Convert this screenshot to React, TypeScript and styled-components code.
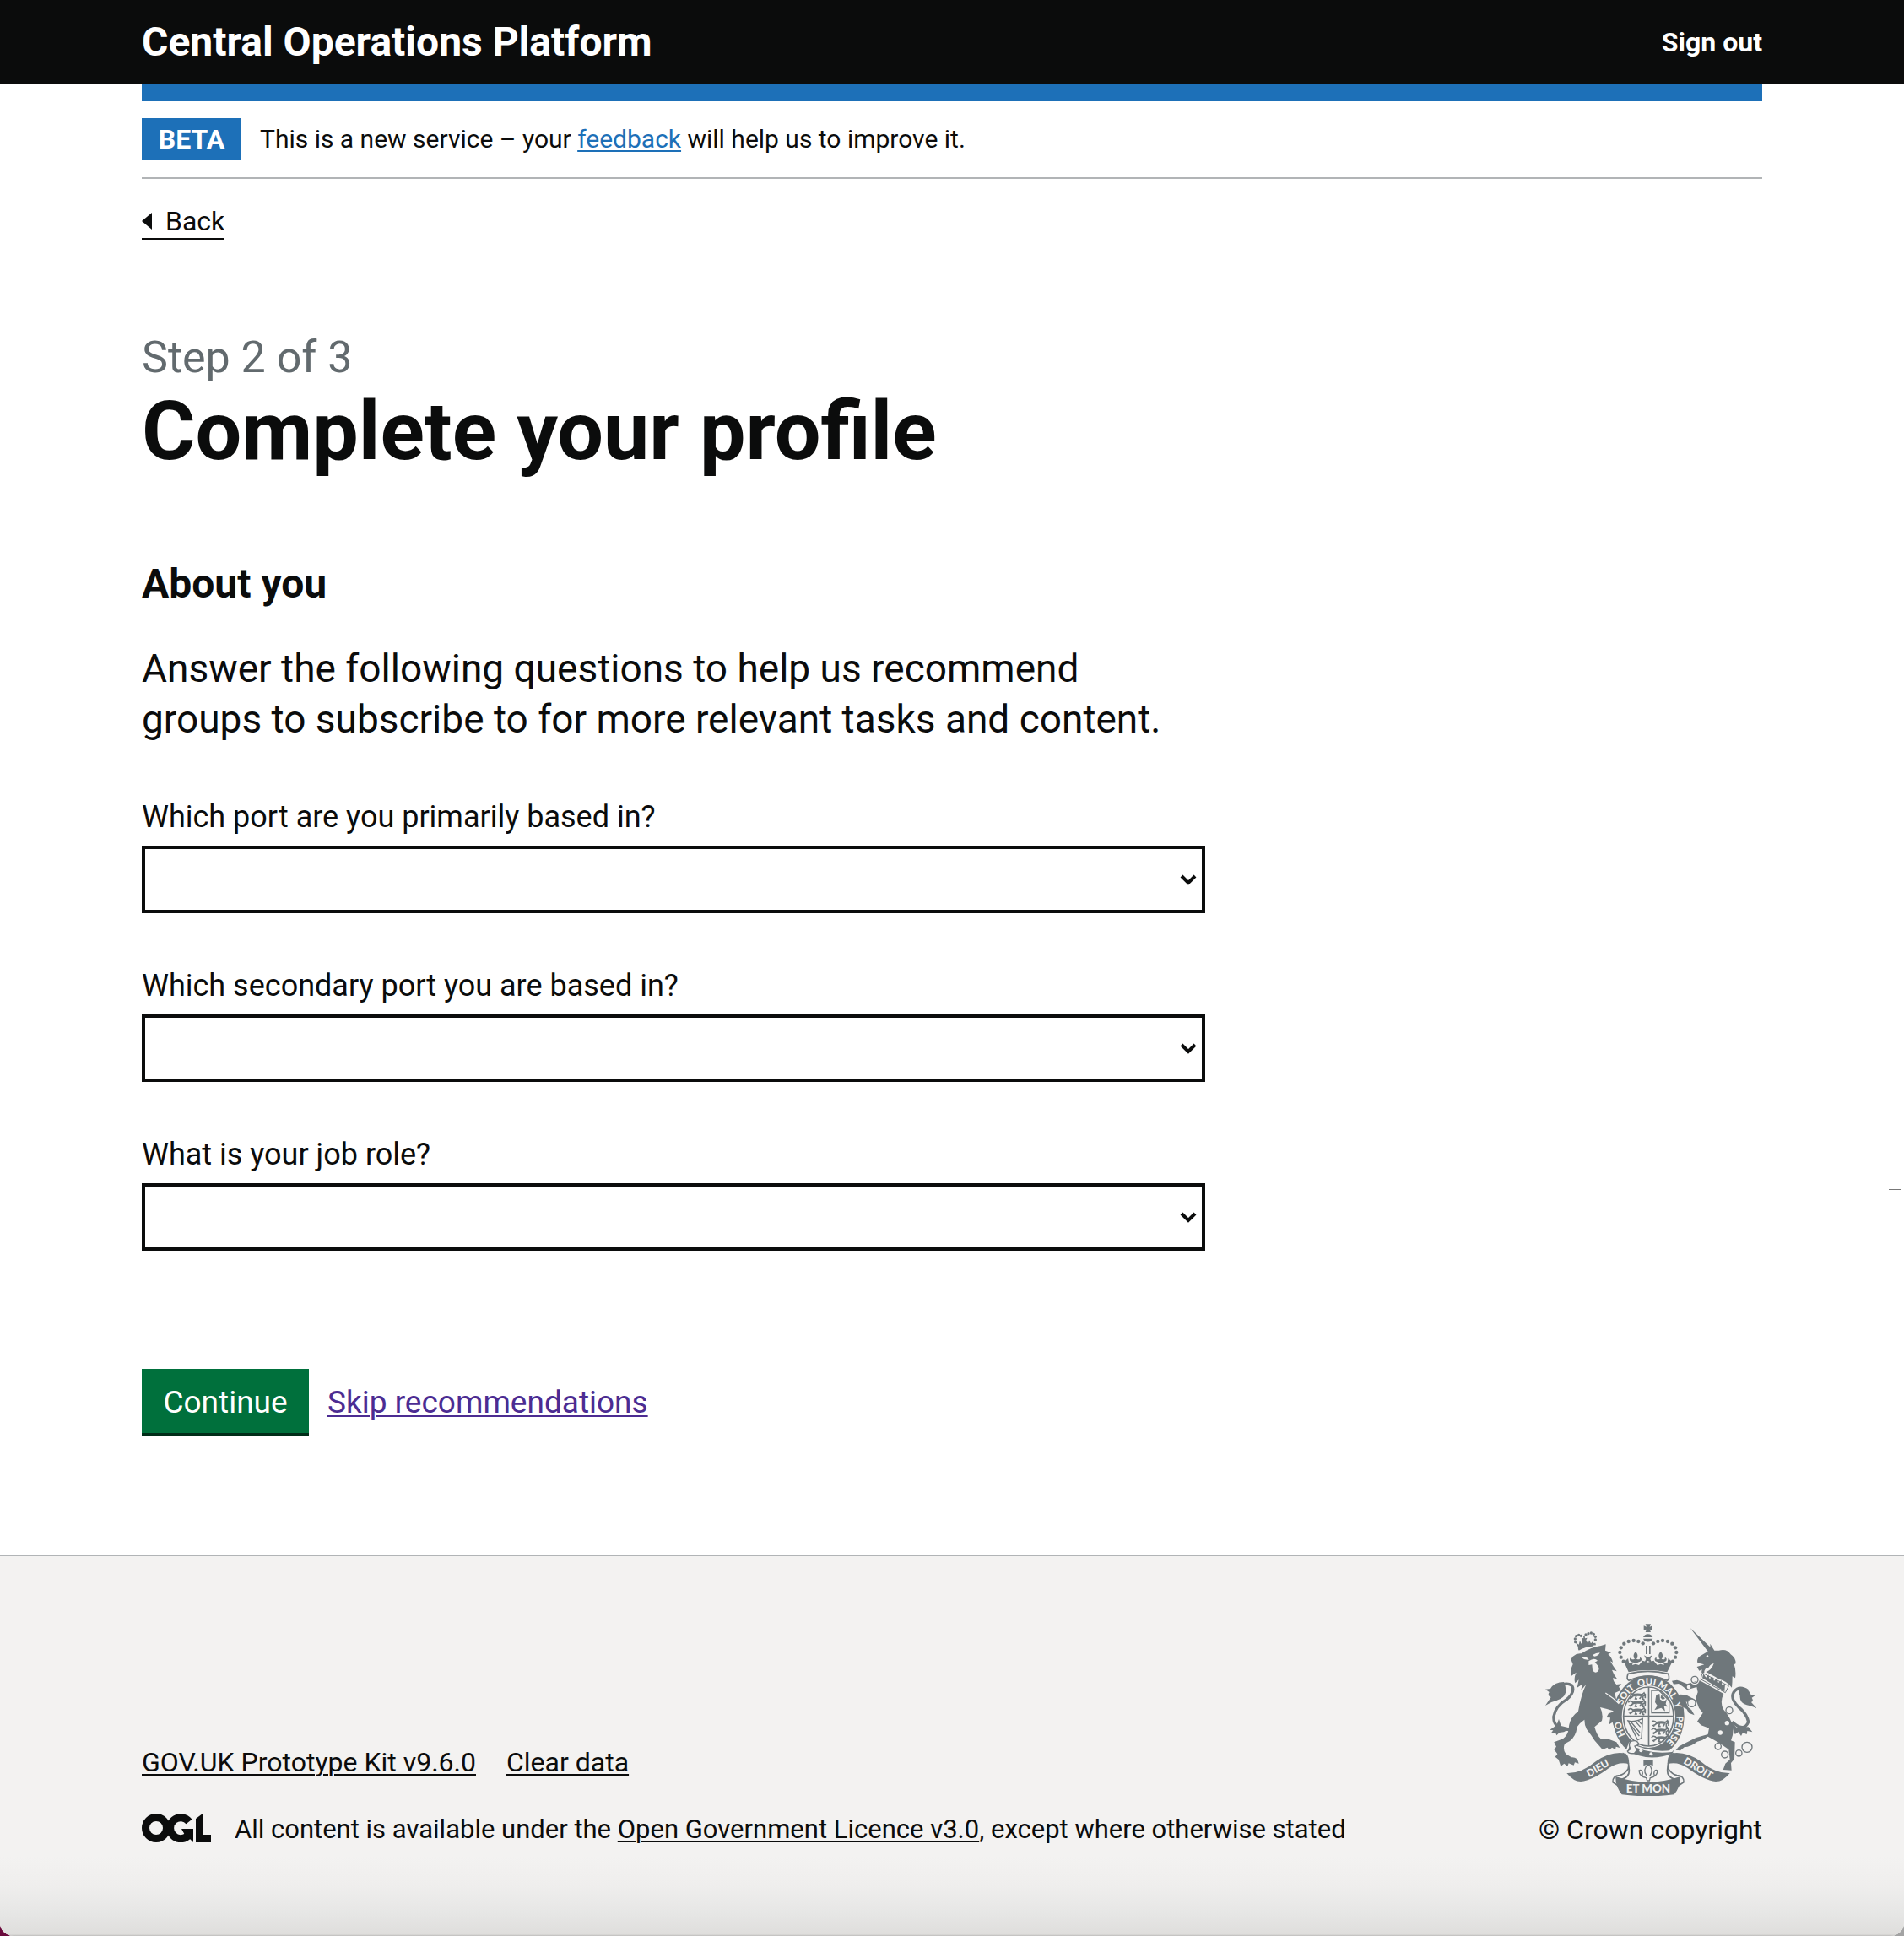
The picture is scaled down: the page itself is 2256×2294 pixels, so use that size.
import React from "react";
import styled, { createGlobalStyle } from "styled-components";

const ink = "#0b0c0c";
const blue = "#1d70b8";
const line = "#b1b4b6";
const footerGrey = "#f3f2f1";
const crestGrey = "#6f777b";

const GlobalStyle = createGlobalStyle`
  *, *::before, *::after { box-sizing: border-box; }
  body {
    margin: 0;
    min-height: 100vh;
    color: ${ink};
    background: linear-gradient(to right, #6a0a3c 50%, #a3a3a3 50%);
    font-family: Roboto, "Liberation Sans", sans-serif;
    -webkit-font-smoothing: antialiased;
  }
`;

const Page = styled.div`
  display: flex;
  flex-direction: column;
  min-height: 100vh;
  position: relative;
  overflow: hidden;
  background: #fff;
  border-radius: 0 0 16px 16px;
`;

const Container = styled.div`
  width: 100%;
  max-width: 2040px;
  margin: 0 auto;
  padding: 0 60px;
`;

const Header = styled.header`
  background: ${ink};
`;

const HeaderRow = styled.div`
  display: flex;
  align-items: center;
  justify-content: space-between;
  min-height: 100px;
`;

const HeaderLink = styled.a<{ $large?: boolean }>`
  color: #fff;
  font-size: ${(p) => (p.$large ? 48 : 32)}px;
  line-height: 60px;
  font-weight: 700;
  text-decoration: none;
`;

const BlueBar = styled.div`
  height: 20px;
  background: ${blue};
`;

const PhaseBanner = styled.div`
  display: flex;
  align-items: center;
  gap: 22px;
  padding: 20px 0;
  border-bottom: 2px solid ${line};
  font-size: 30px;
  line-height: 40px;
`;

const Tag = styled.strong`
  min-width: 118px;
  text-align: center;
  color: #fff;
  background: ${blue};
  font-size: 32px;
  line-height: 50px;
`;

const TextLink = styled.a<{ $color?: string }>`
  color: ${(p) => p.$color || ink};
  text-decoration: underline;
  text-decoration-thickness: 2px;
  text-underline-offset: 3px;
`;

const BackLink = styled.a`
  display: inline-flex;
  align-items: center;
  gap: 16px;
  margin: 30px 0 108px;
  border-bottom: 2px solid ${ink};
  color: ${ink};
  font-size: 32px;
  line-height: 40px;
  text-decoration: none;
`;

const Main = styled.main`
  width: calc((100% + 60px) * 2 / 3 - 60px);
`;

const Caption = styled.span`
  display: block;
  color: #626a6e;
  font-size: 52px;
  line-height: 64px;
`;

const Title = styled.h1`
  margin: 0 0 96px;
  font-size: 97px;
  line-height: 110px;
  font-weight: 700;
`;

const Heading = styled.h2`
  margin: 0 0 40px;
  font-size: 48px;
  line-height: 60px;
  font-weight: 700;
`;

const Lead = styled.p`
  margin: 0 0 60px;
  font-size: 46px;
  line-height: 60px;
`;

const Form = styled.form`
  display: flex;
  flex-direction: column;
  gap: 60px;
`;

const Field = styled.div`
  display: flex;
  flex-direction: column;
  gap: 8px;
`;

const Label = styled.label`
  font-size: 36px;
  line-height: 52px;
`;

const SelectBox = styled.div`
  position: relative;
  display: flex;
`;

const Select = styled.select`
  appearance: none;
  width: 100%;
  height: 80px;
  padding: 10px 60px 10px 10px;
  border: 4px solid ${ink};
  border-radius: 0;
  background: #fff;
  color: ${ink};
  font: inherit;
  font-size: 36px;
`;

const Chevron = styled.svg`
  position: absolute;
  right: 10px;
  top: 34px;
  width: 20px;
  height: 14px;
  pointer-events: none;
`;

const Actions = styled.div`
  display: flex;
  align-items: center;
  gap: 22px;
  margin: 80px 0 140px;
  font-size: 37px;
  line-height: 50px;
`;

const Button = styled.button`
  min-width: 198px;
  height: 80px;
  padding: 4px 24px 0;
  border: 0;
  border-bottom: 4px solid #002d18;
  background: #00703c;
  color: #fff;
  font: inherit;
`;

const Footer = styled.footer`
  flex: 1;
  padding: 80px 0 104px;
  border-top: 2px solid ${line};
  background:
    linear-gradient(to top, #bdbcbb 0, #dfdedc 2px, #e6e6e5 26px, #efeeed 60px, transparent 94px),
    ${footerGrey};
  font-size: 31px;
  line-height: 40px;
`;

const FooterRow = styled.div`
  display: flex;
  align-items: flex-end;
  justify-content: space-between;
`;

const FooterMeta = styled.div`
  display: flex;
  flex-direction: column;
  gap: 40px;
`;

const FooterLinks = styled.ul`
  display: flex;
  gap: 36px;
  margin: 0;
  padding: 0;
  list-style: none;
  font-size: 32px;
`;

const Licence = styled.div`
  display: flex;
  align-items: center;
  gap: 28px;
`;

const OglLogo = styled.svg`
  width: 82px;
  height: 34px;
  margin-bottom: 4px;
`;

const Copyright = styled.a`
  display: flex;
  flex-direction: column;
  align-items: center;
  gap: 20px;
  color: ${ink};
  font-size: 32px;
  text-decoration: none;
`;

const CrestSvg = styled.svg`
  width: 250px;
  height: 204px;
`;

const CrestText = styled.text`
  fill: ${footerGrey};
  font-family: Lato, sans-serif;
  font-weight: 900;
  text-anchor: middle;
`;

const EdgeMark = styled.span`
  position: absolute;
  right: 4px;
  top: 1409px;
  width: 14px;
  height: 1px;
  background: #777;
`;

const Ogl = () => (
  <OglLogo viewBox="0 0 82 34" role="img" aria-label="Open Government Licence">
    <g fill="none" stroke={ink} strokeWidth="9">
      <circle cx="17" cy="17" r="12.5" />
      <path d="M56 9.500A12.500 12.500 0 1 0 55 26" />
    </g>
    <path fill={ink} d="M47 18h14v16l-4-4-5-3zM64 6l8-6v25h10v9H64z" />
  </OglLogo>
);

const beads = [
  [383, 97], [367, 90], [350, 87], [332, 90], [316, 98], [305, 112], [301, 129], [305, 146], [314, 161],
];

const LionsQuarter = ({ x, y }: { x: number; y: number }) => (
  <g transform={`translate(${x} ${y})`} fill="none" stroke={crestGrey} strokeWidth="5">
    {[0, 27, 54].map((dy) => (
      <g key={dy} transform={`translate(0 ${dy})`}>
        <path d="M2 8q4-8 12-4l6 5h24q9-2 14-8l4 7-8 5v10l5 2M20 9q-3 8-12 10l4 3M30 12l-3 10h7M48 14l-6 8M62 4v16" />
        <path d="M18 10q18-6 34 0" strokeWidth="9" />
      </g>
    ))}
  </g>
);

const Crest = () => (
  <CrestSvg viewBox="36 27 750 612" role="img" aria-label="Royal coat of arms">
    <g fill={crestGrey}>
      {/* lion crown */}
      <path d="M152 108l-9-15 12 8 4-14 5 12 4-14-4-8 8 2-1-9h5l1 9 8-2-4 8 7 13 4-13 6 12 10-11-3 16-1 5q-28 2-49 15z" />
      {[[143, 92], [142, 81], [146, 71], [155, 67], [163, 70], [180, 66], [189, 62], [199, 60], [208, 64], [214, 73], [214, 84]].map(([x, y]) => (
        <circle key={`${x}-${y}`} cx={x} cy={y} r="5" />
      ))}
      <path d="M152 113q26-17 62-18l2 8q-36 4-62 17z" />
      {/* lion body */}
      <path d="M134 143q14-12 30-10 32-22 70-28l17-5-2 22 21 8-11 5q14 11 17 30l-9-5q10 18 23 36l-17-5q5 15 18 32l-15-3q3 16 13 23l18-2-10 10 8 12-22 10 6 28 8 38 18 32 2 36-12 12 2-20-12 6-2-16-12 8-6-20-12 8 4-24-14-1 8-14 22-8-28-8-24-6q12 24 6 48l-26 22q8 30 22 42l30 2 26 10 12 20-14-4-2 10-12-7-10 9-6-9-18 7-28-32q-12-20-28-40-8-14-8-34-18 12-26 26-4 34-26 50l-18 10q-8 20 4 36l20 12q22-2 26 22l-14-4-4 10-18-7-4 11-12-10-12 10-8-24-12-10 8-10-12-16 8-10-8-16 32-12q18-14 20-36 2-38 34-62 10-58 28-96l-18 22 4-22-18 12 6-28-13 12q-6-18 4-38l-18 13q-6-20 6-42l-7-17z" />
      {/* lion tail */}
      <path d="M122 404Q62 400 66 356q6-36 46-60 32-28 18-50-22-14-52 8" fill="none" stroke={crestGrey} strokeWidth="10" />
      <path d="M102 234q-34 0-48 24l-18 2 14 10q-8 14 6 18l-20 30q20-14 40-18 28-10 32-28 4-14-6-38zM52 404l24-16 8-22 8 24 34 8-24 14-16 2-10 10-4-10-16 2 8-10z" />
      {/* royal crown */}
      <path d="M392 28h19l-4 10 10-4v17l-10-4 4 10h-19l4-10-10 4V34l10 4z" />
      <path d="M384 75a18 17 0 0 1 34 0zM384 80h34a18 17 0 0 1-34 0z" />
      {beads.map(([x, y]) => (
        <React.Fragment key={`${x}-${y}`}>
          <circle cx={x} cy={y} r="6.500" />
          <circle cx={803 - x} cy={y} r="6.500" />
        </React.Fragment>
      ))}
      <path d="M393 105h5v30h-5zM405 105h5v30h-5zM387 139l14 8 15-8-7 14 7 14-15-8-14 8 7-14z" />
      <path d="M357 126q14 14 3 26 14 6 12-6 10 4 4 14l-14 6h-10l-14-6q-6-10 4-14-2 12 12 6-11-12 3-26zM446 126q14 14 3 26 14 6 12-6 10 4 4 14l-14 6h-10l-14-6q-6-10 4-14-2 12 12 6-11-12 3-26z" />
      <path d="M316 163l14-13 4 18 14-6-3 12 12-4 12 4 13-16 19 6 20-6 13 16 12-4 12 4-3-12 14 6 4-18 14 13-18 36q-68-14-137 0z" />
      <path d="M330 205q71-18 143 0 7 20-4 24-67-32-136 0-10-4-3-24z" fill="none" stroke={crestGrey} strokeWidth="5" />
      {/* garter */}
      <ellipse cx="403" cy="358" rx="127" ry="147" />
      <ellipse cx="403" cy="357" rx="95" ry="111" fill={footerGrey} />
      <ellipse cx="403" cy="357" rx="89" ry="105" fill="none" stroke={crestGrey} strokeWidth="5" />
      <path d="M401 252h5v210h-5zM315 353h176v5H315z" />
      <LionsQuarter x={329} y={272} />
      <LionsQuarter x={412} y={370} />
      <path d="M414 264h26l36 36v44h-62z" fill="none" stroke={crestGrey} strokeWidth="4" />
      <path d="M424 334l10-16-8-12 4-26 12-4 2 20 14 8 10-10-4 18 6 10-12-2 4 18-14-12-12 4zM448 280l14 12-8 6-8-8z" />
      <path d="M330 372q20 6 52-8l-4 70-14 6zM342 378l30 36M336 382l34 44M356 374l18 20M366 370l12 14" fill="none" stroke={crestGrey} strokeWidth="4" />
    </g>
    <defs>
      <path id="motto-ring" pathLength="100" d="M403 474A99 115 0 0 1 403 244A99 115 0 0 1 403 474" />
    </defs>
    {[
      ["HO", 19], ["SOIT", 37], ["QUI", 49], ["MAL", 60], ["Y", 69], ["PENSE", 82],
    ].map(([word, at]) => (
      <CrestText key={word} fontSize="33">
        <textPath href="#motto-ring" startOffset={at}>{word}</textPath>
      </CrestText>
    ))}
    {/* belt and buckle */}
    <path d="M335 452q66 38 150 28l16-20-10 30q-86 34-166-8z" fill={crestGrey} stroke={footerGrey} strokeWidth="6" />
    <path d="M338 446q26-10 30 10l-14 6 8 14-10 12q-20 2-24-8l12-8q-10-12-2-26z" fill={footerGrey} stroke={crestGrey} strokeWidth="4" />
    <circle cx="376" cy="478" r="6" fill={footerGrey} />
    <circle cx="412" cy="490" r="6" fill={footerGrey} />
    <path d="M250 273q28 18 48 38" fill="none" stroke={footerGrey} strokeWidth="4" />
    {/* lion face */}
    <path d="M165 147q18-6 26 8-16 2-26-8zM204 138q12-8 26-8-4 12-20 13zM190 160q20-14 32-2l-10 6 6 6q14 14 6 26-12 10-20-4l-2-20-12 2z" fill={footerGrey} />
    <g fill={crestGrey}>
      {/* unicorn head and neck */}
      <path d="M551 42l84 80-18 8zM622 98l15 24h16q28-8 42 14 18 12 18 32l-6 4q8 22 4 48l-10-6q0 20-2 40-18-24-44-30l-48-26q20-6 28-30-12 2-18 14-16 0-16 20l-10-2 2-10-10 4-8-14 26-8-24-6q-4-18 12-26l34-20z" />
      <path d="M594 202l94 46-12 24-88-48z" fill={footerGrey} stroke={crestGrey} strokeWidth="3" />
      <path d="M594 220l4-16 9 14 9-10 4 16 9-12 7 18 10-10 5 17 11-9 2 18 11-6-2 28z" />
      {/* unicorn body */}
      <path d="M584 228l86 48q-14 28-2 54 32 36 36 72 0 22-8 40l14 6-2 60-12 14 2 26-30-2 8-22 16-14-4-36q-40-28-74-46-18 14-38 18-22 18-46 20l-14 12-16-2 10-12 14-8 48-24 42-12 4-22-28-10-14-14 20-30-14-18-12-32 8-24-4-18-34 10-18-14-12-8-18 2-6-12 18-3 12 4 24 10z" />
      <path d="M574 300l-38-20-22-2-14 10 14 14 12 22 12 6 8 14 20 8-10-18-12-10-8-20 36 16z" />
      <path d="M700 376q42 38 58 0-6-30-36-54-30-30-16-52 20-26 50-4" fill="none" stroke={crestGrey} strokeWidth="10" />
      <path d="M720 256q34-8 46 22l16 4-12 8q8 12-2 16l20 22q-24-10-36-12-26-8-24-32zM692 372l24 24 42-2 14 18-18-4-2 12-14-6-6 12-10-14-12 8z" />
    </g>
    <g fill="none" stroke={crestGrey} strokeWidth="4">
      <circle cx="567" cy="226" r="13" stroke={footerGrey} strokeWidth="9" />
      <circle cx="567" cy="226" r="12" />
      <circle cx="556" cy="308" r="14" fill={footerGrey} />
      <circle cx="690" cy="335" r="12" fill={footerGrey} />
      <circle cx="650" cy="463" r="11" />
      <circle cx="674" cy="492" r="12" />
      <circle cx="724" cy="487" r="11" />
      <circle cx="753" cy="466" r="18" />
    </g>
    <g fill={footerGrey}>
      <circle cx="682" cy="380" r="8" />
      <circle cx="658" cy="414" r="8" />
      <circle cx="612" cy="143" r="4" />
      <circle cx="546" cy="252" r="7" />
    </g>
    {/* pendant */}
    <path d="M385 512h34v20q-17-8-34 0z" fill={crestGrey} />
    <path d="M402 525q22 22 6 42 20 8 14-8 2-16 13-10-2 22-26 26l-3 10h-8l-3-10q-24-4-26-26 11-6 13 10-6 16 14 8-16-20 6-42z" fill={footerGrey} stroke={crestGrey} strokeWidth="4" />
    {/* ribbon */}
    <g fill={footerGrey} stroke={crestGrey} strokeWidth="5">
      <path d="M314 500q26 20 16 44-14 20-30 22-26 2-24 24l18 12 8-20q34-8 32-36-2-40-20-56zM490 500q-26 20-16 44 14 20 30 22 26 2 24 24l-18 12-8-20q-34-8-32-36 2-40 20-56z" />
    </g>
    <g fill={crestGrey}>
      <path d="M112 558q52 2 104-42 54-38 106-28 12 10 12 38-36-10-72 14-58 44-100 48-26 0-50-30zM692 558q-52 2-104-42-54-38-106-28-12 10-12 38 36-10 72 14 58 44 100 48 26 0 50-30z" />
      <path d="M286 570q116 40 230 0 2 34-22 64-92 12-186 0-24-30-22-64z" />
    </g>
    <CrestText fontSize="36" x="222" y="553" transform="rotate(-30 222 540)">DIEU</CrestText>
    <CrestText fontSize="40" x="402" y="628">ET MON</CrestText>
    <CrestText fontSize="36" x="580" y="553" transform="rotate(31 580 540)">DROIT</CrestText>
  </CrestSvg>
);

const fields = [
  { id: "primary-port", label: "Which port are you primarily based in?" },
  { id: "secondary-port", label: "Which secondary port you are based in?" },
  { id: "job-role", label: "What is your job role?" },
];

const SelectField = ({ id, label }: { id: string; label: string }) => (
  <Field>
    <Label htmlFor={id}>{label}</Label>
    <SelectBox>
      <Select id={id} name={id} defaultValue="">
        <option value="" />
      </Select>
      <Chevron viewBox="0 0 20 14" aria-hidden="true">
        <path d="M2 2l8 8 8-8" fill="none" stroke={ink} strokeWidth="4" />
      </Chevron>
    </SelectBox>
  </Field>
);

export default function App() {
  return (
    <>
      <GlobalStyle />
      <Page>
        <Header>
          <Container>
            <HeaderRow>
              <HeaderLink href="#" $large>Central Operations Platform</HeaderLink>
              <HeaderLink href="#">Sign out</HeaderLink>
            </HeaderRow>
          </Container>
        </Header>
        <Container>
          <BlueBar />
          <PhaseBanner>
            <Tag>BETA</Tag>
            <span>
              This is a new service – your <TextLink href="#" $color={blue}>feedback</TextLink> will help us to improve it.
            </span>
          </PhaseBanner>
          <BackLink href="#">
            <svg width="12" height="20" viewBox="0 0 12 20" aria-hidden="true">
              <path d="M0 10L12 0v20z" fill={ink} />
            </svg>
            Back
          </BackLink>
          <Main>
            <Caption>Step 2 of 3</Caption>
            <Title>Complete your profile</Title>
            <Heading>About you</Heading>
            <Lead>
              Answer the following questions to help us recommend groups to subscribe to for more relevant tasks and content.
            </Lead>
            <Form onSubmit={(e) => e.preventDefault()}>
              {fields.map((f) => (
                <SelectField key={f.id} {...f} />
              ))}
              <Actions>
                <Button type="submit">Continue</Button>
                <TextLink href="#" $color="#4c2c92">Skip recommendations</TextLink>
              </Actions>
            </Form>
          </Main>
        </Container>
        <Footer>
          <Container>
            <FooterRow>
              <FooterMeta>
                <FooterLinks>
                  <li><TextLink href="#">GOV.UK Prototype Kit v9.6.0</TextLink></li>
                  <li><TextLink href="#">Clear data</TextLink></li>
                </FooterLinks>
                <Licence>
                  <Ogl />
                  <span>
                    All content is available under the <TextLink href="#">Open Government Licence v3.0</TextLink>, except where otherwise stated
                  </span>
                </Licence>
              </FooterMeta>
              <Copyright href="#">
                <Crest />
                © Crown copyright
              </Copyright>
            </FooterRow>
          </Container>
        </Footer>
        <EdgeMark />
      </Page>
    </>
  );
}
